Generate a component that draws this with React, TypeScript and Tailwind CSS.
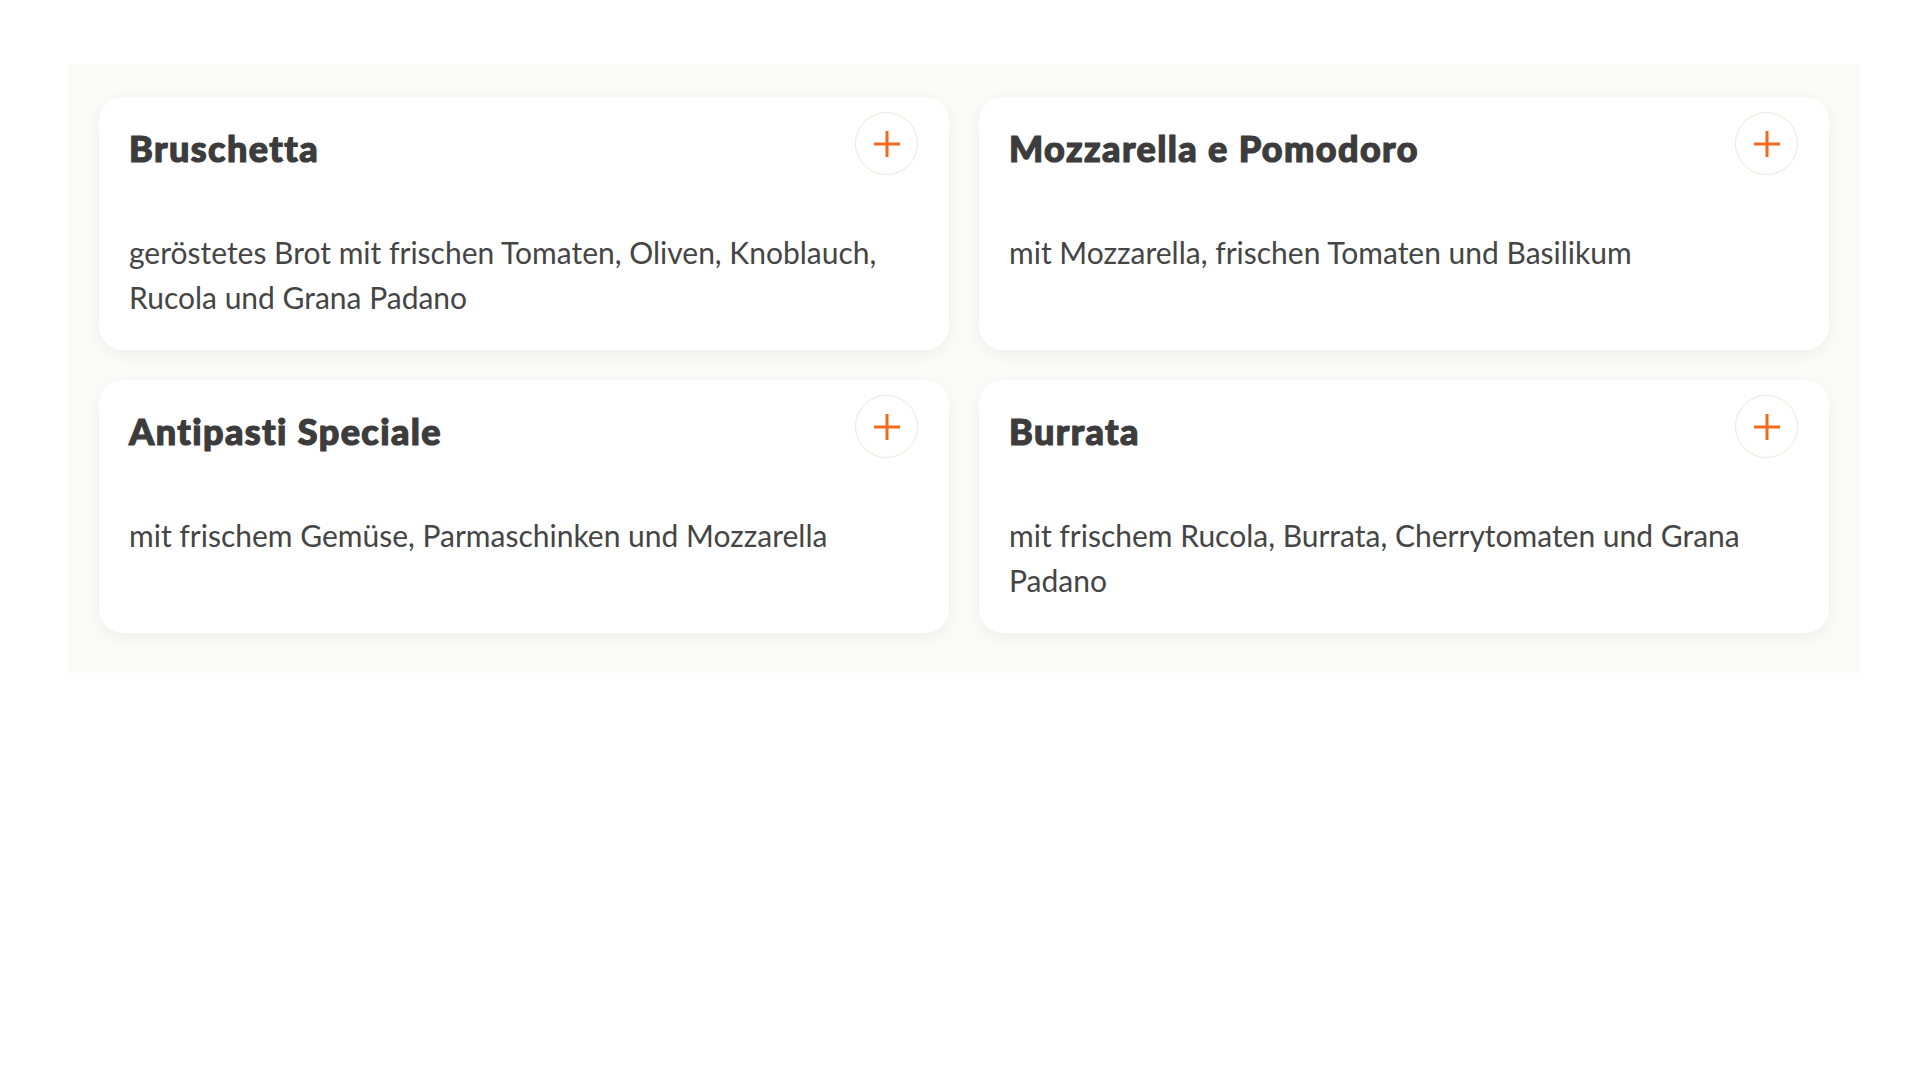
const dishes = [
    {
        name: 'Bruschetta',
        text: 'geröstetes Brot mit frischen Tomaten, Oliven, Knoblauch, Rucola und Grana Padano',
    },
    {
        name: 'Mozzarella e Pomodoro',
        text: 'mit Mozzarella, frischen Tomaten und Basilikum',
    },
    {
        name: 'Antipasti Speciale',
        text: 'mit frischem Gemüse, Parmaschinken und Mozzarella',
    },
    {
        name: 'Burrata',
        text: 'mit frischem Rucola, Burrata, Cherrytomaten und Grana Padano',
    },
];

const PlusIcon = () => (
    <svg width="28" height="28" viewBox="0 0 28 28" fill="none">
        <path d="M14 1v26M1 14h26" stroke="#f26a1b" strokeWidth="3" />
    </svg>
);

const App = () => {
    return (
        <div className="min-h-screen bg-white pt-[64px] font-['Lato',sans-serif]">
            <div className="ml-[68px] mr-[60px] bg-[#fbfbf9] pt-[33px] pb-[40px] px-[31px]">
                <div className="grid grid-cols-2 gap-[30px]">
                    {dishes.map((dish) => (
                        <div
                            key={dish.name}
                            className="relative bg-white rounded-[24px] p-[30px] shadow-[0_4px_18px_rgba(0,0,0,0.06)]"
                        >
                            <button className="absolute top-[15px] right-[31px] w-[63px] h-[63px] rounded-full border border-[#ece6df] bg-white flex items-center justify-center">
                                <PlusIcon />
                            </button>
                            <h3 className="text-[36px] leading-[43px] font-black tracking-[1.4px] text-[#3c3c3c] [-webkit-text-stroke:1.2px_#3c3c3c] mb-[60px]">
                                {dish.name}
                            </h3>
                            <p className="text-[30px] leading-[45px] text-[#454545] pr-[10px]">
                                {dish.text}
                            </p>
                        </div>
                    ))}
                </div>
            </div>
        </div>
    );
};

export default App;
